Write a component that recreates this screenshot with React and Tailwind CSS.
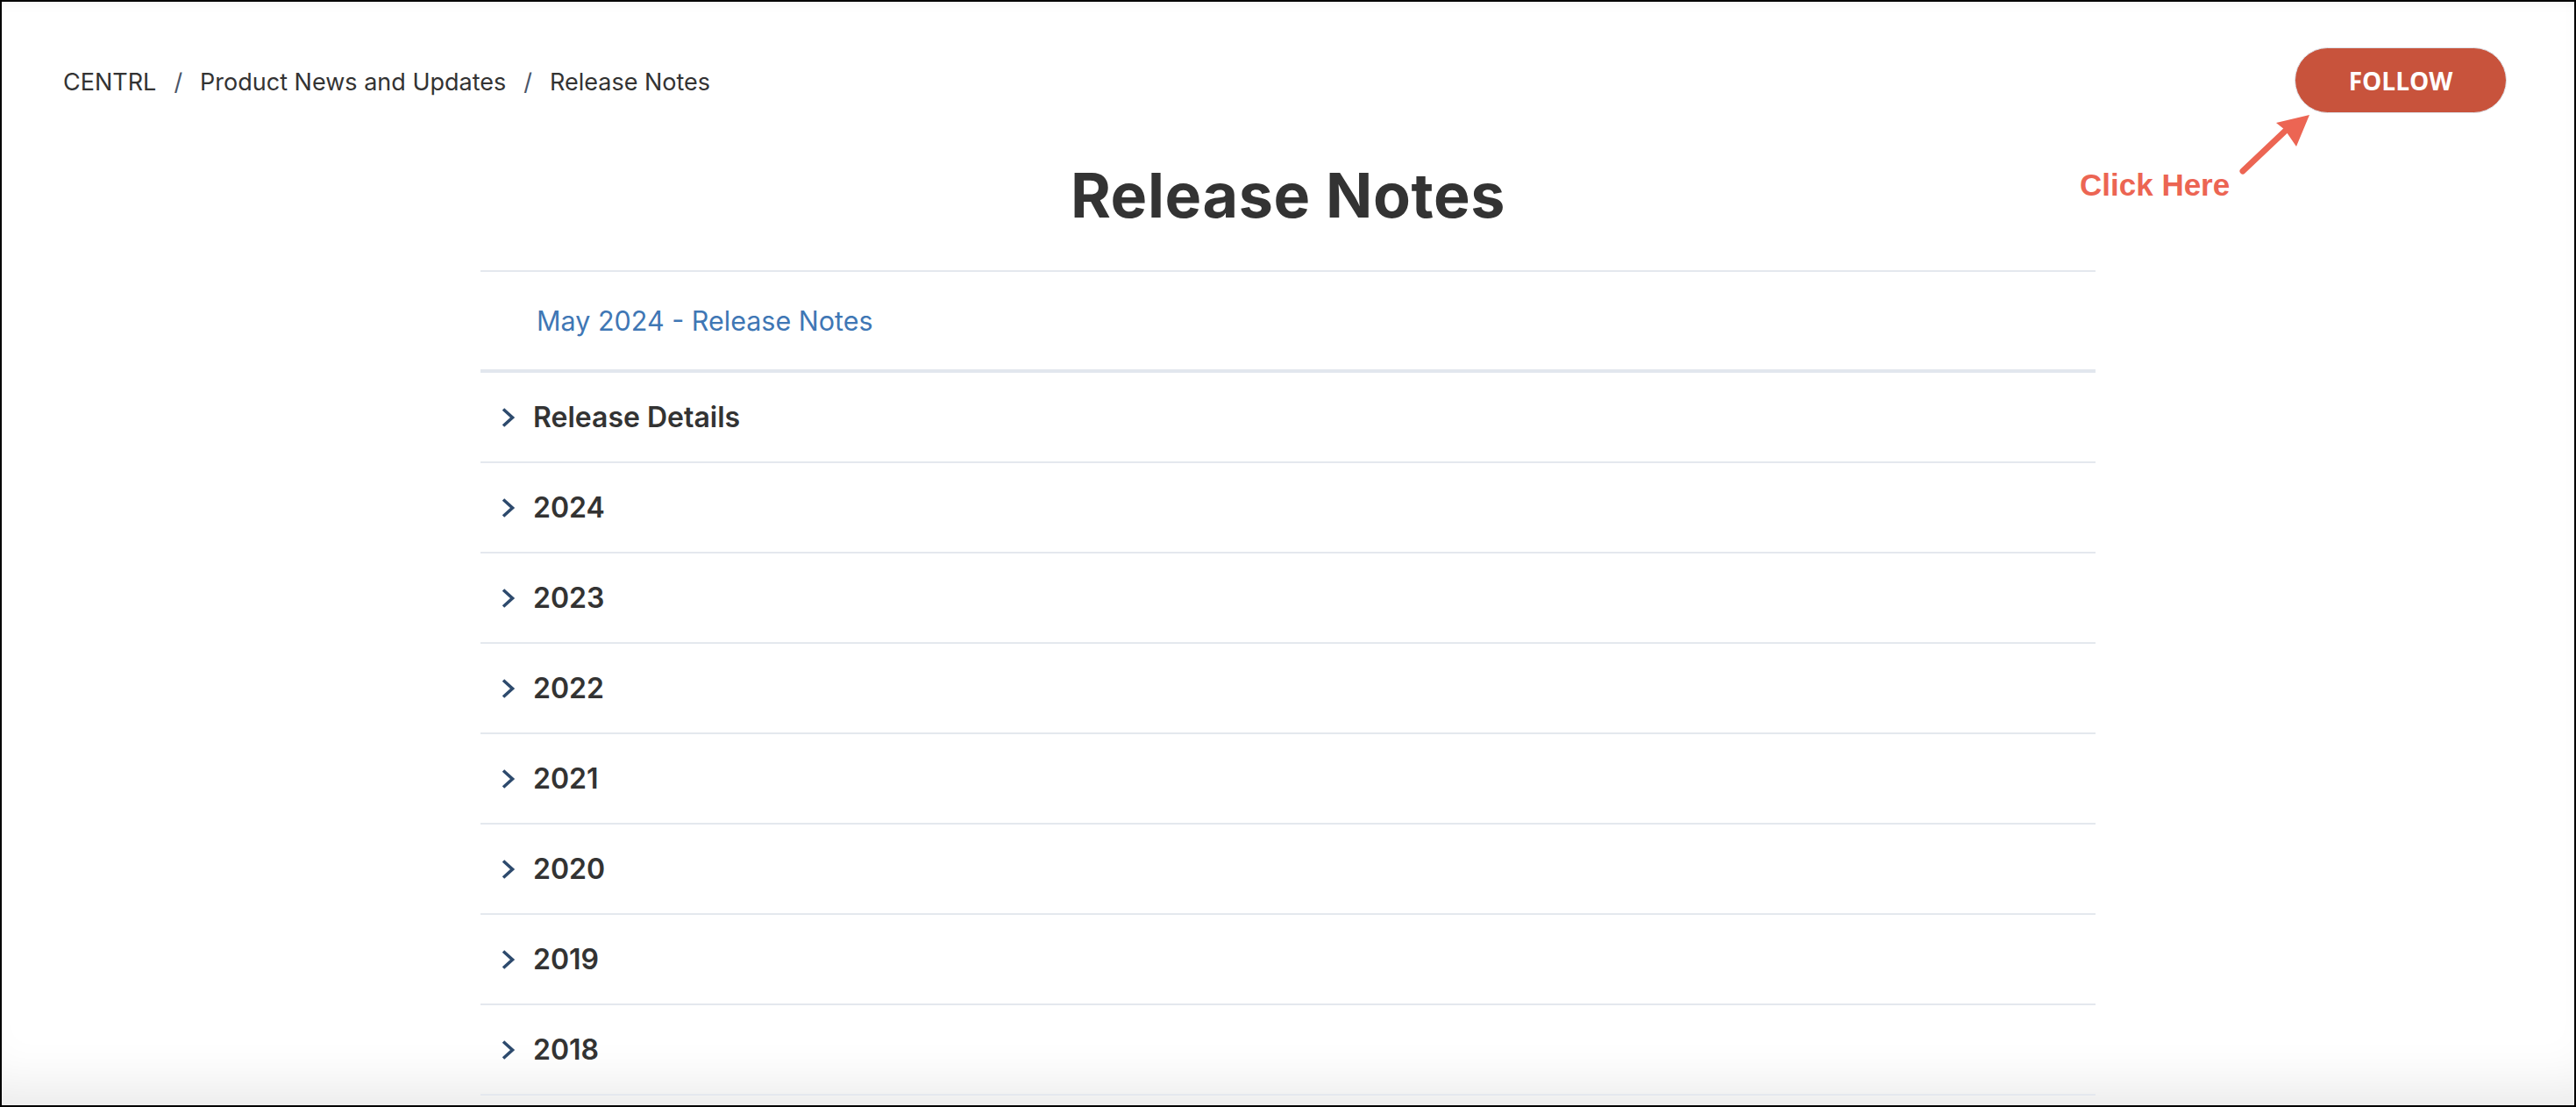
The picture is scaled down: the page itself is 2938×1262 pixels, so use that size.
import React from 'react';

const years = ['Release Details', '2024', '2023', '2022', '2021', '2020', '2019', '2018'];

const Chevron = () => (
  <svg width="17" height="24" viewBox="0 0 17 24" fill="none" className="shrink-0">
    <path d="M3 2.5 L13.5 12 L3 21.5" stroke="#2d4a6d" strokeWidth="3.6" strokeLinecap="butt" strokeLinejoin="miter" />
  </svg>
);

const App = () => {
  return (
    <div className="relative w-[2938px] h-[1262px] overflow-hidden bg-white border-2 border-black shadow-[inset_0_-60px_60px_-40px_rgba(0,0,0,0.09),inset_0_14px_14px_-12px_rgba(0,0,0,0.05)] font-['Inter',sans-serif] text-[#333333]">

      <div className="flex flex-row justify-between items-center pt-[52px] pl-[70px] pr-[77px]">
        <nav className="flex flex-row items-center text-[27px] text-[#333333] mt-[6px]">
          <span>CENTRL</span>
          <span className="mx-[20px] text-[#4a5568]">/</span>
          <span>Product News and Updates</span>
          <span className="mx-[20px] text-[#4a5568]">/</span>
          <span>Release Notes</span>
        </nav>
        <button className="w-[242px] h-[75px] rounded-full bg-[#c8533c] border border-[#dde3ea] text-white text-[28px] font-bold font-['Open_Sans',sans-serif] uppercase flex items-center justify-center">
          Follow
        </button>
      </div>

      <h1 className="mt-[59px] text-center text-[70px] leading-none font-bold text-[#333333] tracking-[0.6px]">
        Release Notes
      </h1>

      <div className="w-[1842px] mx-auto mt-[50px] border-t-2 border-[#e4e8ee]">
        <div className="h-[115px] flex items-center pl-[64px] border-b-4 border-[#e2e7ee]">
          <a className="text-[30.5px] text-[#3f77b5]">May 2024 - Release Notes</a>
        </div>
        {years.map((label) => (
          <div key={label} className="h-[103px] flex flex-row items-center gap-[20px] pl-[23px] border-b-2 border-[#e4e8ee]">
            <Chevron />
            <span className="text-[32px] font-semibold text-[#333333]">{label}</span>
          </div>
        ))}
      </div>

      {/* annotation */}
      <div className="absolute left-[2370px] top-[183px] text-[35px] font-bold text-[#ec6553] font-['Liberation_Sans',Arial,sans-serif]">
        Click Here
      </div>
      <svg className="absolute left-[2540px] top-[120px]" width="110" height="90" viewBox="2540 120 110 90">
        <path d="M2556 193 L2612 140" stroke="#ec6553" strokeWidth="7" strokeLinecap="round" />
        <path d="M2632 129 L2594 138 L2604 146 L2617 165 Z" fill="#ec6553" />
      </svg>
    </div>
  );
};

export default App;
